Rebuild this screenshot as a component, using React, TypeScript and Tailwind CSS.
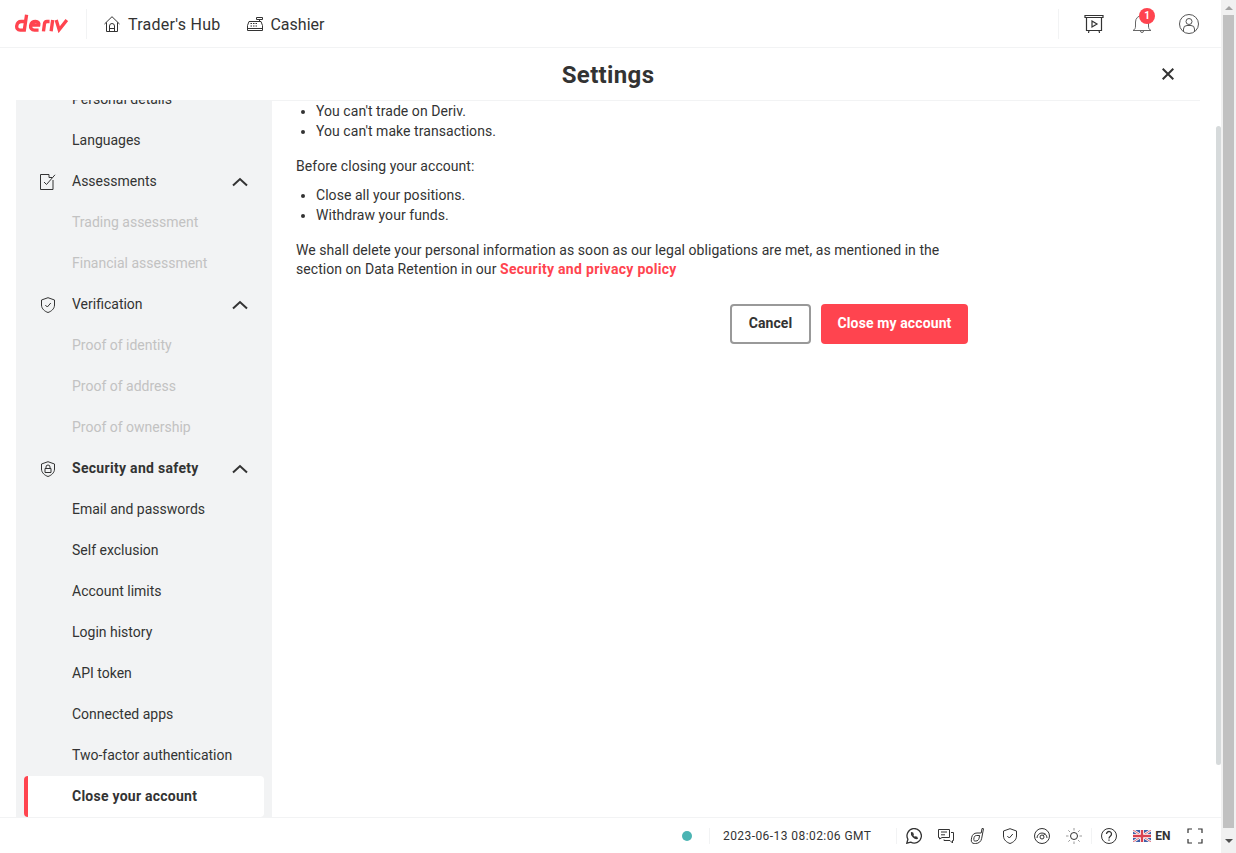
const cls = 'fill-none stroke-[#333333]'

function Logo() {
  return (
    <svg width="53" height="19" viewBox="0 0 54 19" aria-label="deriv" className="ml-[15px] mr-px shrink-0">
      <g fill="none" stroke="#ff444f" strokeWidth="3.400" strokeLinecap="butt">
        <path d="M11.800 .6 9.500 16.200H5.200C2.600 16.200 1.400 14.200 1.800 11.800 2.200 9.200 4 7.500 6.400 7.500H10.700" />
        <path d="M15.600 11.200H24.200C24.800 9 23.600 7.500 21 7.500 18 7.500 16.400 9.200 15.900 11.600 15.500 14.200 17 16.200 19.800 16.200H24" />
        <path d="M29 17.500 30 10C30.200 8.600 31 7.500 32.600 7.500H35.200" />
        <path d="M38.400 6 36.800 17.500" />
        <path d="M42 6 45 15.800 52.800 6" />
      </g>
    </svg>
  )
}

function HomeIcon() {
  return (
    <svg width="16" height="16" viewBox="0 0 16 16" className={cls}>
      <path d="M.5 8 8 .7 15.500 8M2.500 6.400V15.500H13.500V6.400" />
      <path d="M5.500 15.500V10a2.500 2.500 0 0 1 5 0v5.500M5.500 12.500h5" />
    </svg>
  )
}

function CashierIcon() {
  return (
    <svg width="16" height="16" viewBox="0 0 16 16" className={cls}>
      <path d="M.5 9.500 2 5.500H14L15.500 9.500V14.500H.5ZM.5 12.500H15.500M9.500 1.500H15.500V3.500H9.500ZM12.500 3.500V5.500" />
      <path d="M3.500 7.500H5M6 7.500H7.500M8.500 7.500H10M3.500 10H5M6 10H7.500M8.500 10H10" />
    </svg>
  )
}

function ReportsIcon() {
  return (
    <svg width="20" height="20" viewBox="0 0 20 20" className={cls}>
      <path strokeWidth="1.200" d="M1 1.500H19V3.500H1ZM2.500 3.500V16.500H17.500V3.500M5 16.500 4.500 19M15 16.500 15.500 19" />
      <path strokeWidth="1.200" d="M8 7 13 10 8 13Z" />
    </svg>
  )
}

function BellIcon() {
  return (
    <svg width="20" height="20" viewBox="0 0 20 20" className="fill-none stroke-[#666666]">
      <path d="M1 16.500C3 15.500 3.500 14 3.500 12V8a6.500 6.500 0 0 1 13 0v4c0 2 .5 3.500 2.500 4.500Z" />
      <path d="M8.500 17a1.500 1.500 0 0 0 3 0" />
    </svg>
  )
}

function UserIcon() {
  return (
    <svg width="20" height="20" viewBox="0 0 20 20" className="fill-none stroke-[#555555]">
      <circle cx="10" cy="10" r="9.500" />
      <circle cx="10" cy="7.500" r="3" />
      <path d="M4.500 17V15a3.500 3.500 0 0 1 3.500-3.500h4a3.500 3.500 0 0 1 3.500 3.500v2" />
    </svg>
  )
}

function CloseIcon() {
  return (
    <svg width="12" height="12" viewBox="0 0 12 12" className="fill-none stroke-[#333333]">
      <path strokeWidth="2" d="M.7.700 11.300 11.300M11.300.700.7 11.300" />
    </svg>
  )
}

function Chevron() {
  return (
    <svg width="16" height="10" viewBox="0 0 16 10" className="fill-none stroke-[#333333]">
      <path strokeWidth="2" d="M1 8.500 8 2l7 6.500" />
    </svg>
  )
}

function AssessIcon() {
  return (
    <svg width="16" height="16" viewBox="0 0 16 16" className={cls}>
      <path d="M9 .5H.5V15.500H13V6M9 .5V3.500H12" />
      <path d="M4 8 6.500 10.500 15 .8" />
    </svg>
  )
}

function ShieldCheck() {
  return (
    <svg width="16" height="16" viewBox="0 0 16 16" className={cls}>
      <path d="M8 .7 14.500 3V8C14.500 12 11 14.500 8 15.500 5 14.500 1.500 12 1.500 8V3Z" />
      <path d="M5.300 8 7.300 10 10.800 6" />
    </svg>
  )
}

function ShieldLock() {
  return (
    <svg width="16" height="16" viewBox="0 0 16 16" className={cls}>
      <path d="M8 .7 14.500 3V8C14.500 12 11 14.500 8 15.500 5 14.500 1.500 12 1.500 8V3Z" />
      <path d="M5 7.500H11V11.500H5ZM6 7.500V6a2 2 0 0 1 4 0v1.500" />
    </svg>
  )
}

function FooterIcons() {
  const s = 'fill-none stroke-[#333333]'
  return (
    <>
      <svg width="16" height="16" viewBox="0 0 16 16" className={`${s} ml-[9px]`}>
        <path strokeWidth="1.300" d="M.8 15.200 1.900 11.300A7.200 7.200 0 1 1 4.700 14.100Z" />
        <path strokeWidth="1.300" d="M5.500 4.800C4.800 7 8.800 11.300 11.200 10.500L10.800 9.300 9.500 8.900 8.800 9.500C8 9 7 8 6.600 7.200L7.200 6.500 6.700 5Z" />
      </svg>
      <svg width="16" height="16" viewBox="0 0 16 16" className={`${s} ml-4`}>
        <path d="M.5 1.500H11.500V9.500H4L1.500 11V9.500H.5Z" />
        <path d="M3 4H9M3 6.800H7M13 4.500H15.500V12.500H14.500V15L12 12.500H6V11.500" />
      </svg>
      <svg width="16" height="16" viewBox="0 0 16 16" className={`${s} ml-4`}>
        <path d="M13.500.7 12 .5 11.200 5H7C4.200 5 2.200 6.800 1.700 9.300L1.300 11.800C1 14 2.300 15.500 4.300 15.500H5.600C8.800 15.500 11.200 13.400 11.700 10.300Z" />
        <path d="M9.600 7.500H6.700C5.300 7.500 4.300 8.300 4 9.700L3.800 11.400C3.600 12.400 4.200 13 5 13H5.800C7.500 13 8.800 11.900 9.100 10.200Z" />
      </svg>
      <span className="ml-4 flex">
        <ShieldCheck />
      </span>
      <svg width="16" height="16" viewBox="0 0 16 16" className={`${s} ml-4`}>
        <circle cx="8" cy="8" r="7.500" />
        <circle cx="8" cy="9" r="2" />
        <path d="M3 10a5 5 0 0 1 10 0M9.300 7.700 11 5.500" />
      </svg>
      <svg width="16" height="16" viewBox="0 0 16 16" className={`${s} ml-4`}>
        <circle cx="8" cy="8" r="3.500" />
        <path stroke="#999999" d="M8 0V2.500M8 13.500V16M0 8H2.500M13.500 8H16M2.300 2.300 4 4M12 12 13.700 13.700M13.700 2.300 12 4M4 12 2.300 13.700" />
      </svg>
    </>
  )
}

function Flag() {
  return (
    <svg width="18" height="12" viewBox="0 0 18 12" className="ml-[16px]">
      <rect width="18" height="12" fill="#3f5fa8" />
      <path d="M0 0 18 12M18 0 0 12" stroke="#ffffff" strokeWidth="2.400" />
      <path d="M0 0 18 12M18 0 0 12" stroke="#d8404f" strokeWidth="0.800" />
      <path d="M9 0V12M0 6H18" stroke="#ffffff" strokeWidth="4" />
      <path d="M9 0V12M0 6H18" stroke="#d8404f" strokeWidth="2.400" />
    </svg>
  )
}

function Row({ label, tone = 'normal' }: { label: string; tone?: 'normal' | 'muted' | 'active' }) {
  if (tone === 'active') {
    return (
      <div className="mx-2 flex h-[41px] items-center rounded-[4px] border-l-4 border-[#ff444f] bg-white pl-[44px] font-bold tracking-[0.25px] text-[#333333]">
        {label}
      </div>
    )
  }
  return (
    <div className={`flex h-[41px] items-center pl-[56px] ${tone === 'muted' ? 'text-[#c2c2c2]' : 'text-[#333333]'}`}>
      {label}
    </div>
  )
}

function Group({ label, icon, bold }: { label: string; icon: React.ReactNode; bold?: boolean }) {
  return (
    <div className="flex h-[41px] items-center px-[24px] text-[#333333]">
      <span className="flex w-[32px]">{icon}</span>
      <span className={bold ? 'font-bold tracking-[0.3px]' : ''}>{label}</span>
      <span className="ml-auto flex">
        <Chevron />
      </span>
    </div>
  )
}

function Sidebar() {
  return (
    <aside className="w-[256px] shrink-0 overflow-hidden bg-[#f2f3f4] text-[14px]">
      <div className="-mt-[21px]">
        <Row label="Personal details" />
        <Row label="Languages" />
        <Group label="Assessments" icon={<AssessIcon />} />
        <Row label="Trading assessment" tone="muted" />
        <Row label="Financial assessment" tone="muted" />
        <Group label="Verification" icon={<ShieldCheck />} />
        <Row label="Proof of identity" tone="muted" />
        <Row label="Proof of address" tone="muted" />
        <Row label="Proof of ownership" tone="muted" />
        <Group label="Security and safety" icon={<ShieldLock />} bold />
        <Row label="Email and passwords" />
        <Row label="Self exclusion" />
        <Row label="Account limits" />
        <Row label="Login history" />
        <Row label="API token" />
        <Row label="Connected apps" />
        <Row label="Two-factor authentication" />
        <Row label="Close your account" tone="active" />
      </div>
    </aside>
  )
}

function Content() {
  return (
    <main className="flex-1 overflow-hidden border-t border-[#f2f3f4] pl-6 text-[14px] leading-5 tracking-[0.05px] text-[#333333]">
      <div className="w-[672px]">
        <ul className="list-disc pl-5">
          <li>You can't trade on Deriv.</li>
          <li>You can't make transactions.</li>
        </ul>
        <p className="mt-[15px]">Before closing your account:</p>
        <ul className="mt-[9px] list-disc pl-5">
          <li>Close all your positions.</li>
          <li>Withdraw your funds.</li>
        </ul>
        <p className="mt-4 leading-[19px]">
          We shall delete your personal information as soon as our legal obligations are met, as mentioned in the
          section on Data Retention in our{' '}
          <span className="font-bold tracking-[0.3px] text-[#ff444f]">Security and privacy policy</span>
        </p>
        <div className="mt-[25px] flex justify-end gap-[10px]">
          <button className="h-10 w-[81px] rounded-[4px] border-2 border-[#999999] pb-[2px] font-bold text-[#333333]">Cancel</button>
          <button className="h-10 w-[147px] rounded-[4px] bg-[#ff444f] pb-[2px] font-bold tracking-[0.12px] text-white">Close my account</button>
        </div>
      </div>
    </main>
  )
}

function PageScrollbar() {
  return (
    <div className="flex w-[15px] shrink-0 flex-col items-center bg-[#f1f1f1]">
      <div className="mt-[6px] h-0 w-0 border-x-[4px] border-b-[4px] border-x-transparent border-b-[#a3a3a3]" />
      <div className="mt-[5px] h-[813px] w-[11px] bg-[#c1c1c1]" />
      <div className="mt-[11px] h-0 w-0 border-x-[4px] border-t-[4px] border-x-transparent border-t-[#505050]" />
    </div>
  )
}

export default function App() {
  return (
    <div className="flex h-[853px] w-[1236px] overflow-hidden bg-white font-['Roboto',sans-serif]">
      <div className="flex w-[1221px] flex-col">
        <header className="flex h-[48px] shrink-0 items-center border-b border-[#f2f3f4] text-[#333333]">
          <Logo />
          <div className="ml-[17px] h-[30px] w-px bg-[#f2f3f4]" />
          <span className="ml-[17px] flex">
            <HomeIcon />
          </span>
          <span className="ml-2 mt-[2px] text-[16px] tracking-[0.25px]">Trader's Hub</span>
          <span className="ml-[27px] flex">
            <CashierIcon />
          </span>
          <span className="ml-[7px] mt-[2px] text-[16px]">Cashier</span>
          <div className="ml-auto h-[30px] w-px bg-[#f2f3f4]" />
          <span className="ml-[25px] flex">
            <ReportsIcon />
          </span>
          <span className="relative ml-[28px] flex">
            <BellIcon />
            <span className="absolute -right-[3px] -top-[6px] flex h-4 w-4 items-center justify-center rounded-full bg-[#ff444f] text-[10px] font-bold text-white">
              1
            </span>
          </span>
          <span className="ml-[27px] mr-[22px] flex">
            <UserIcon />
          </span>
        </header>
        <div className="flex min-h-0 flex-1">
          <div className="ml-4 flex w-[1184px] flex-col">
            <div className="relative flex h-[52px] shrink-0 items-center justify-center pt-[2px]">
              <h1 className="text-[24px] font-bold tracking-[0.35px] text-[#333333]">Settings</h1>
              <span className="absolute right-[26px] top-[20px] flex">
                <CloseIcon />
              </span>
            </div>
            <div className="flex min-h-0 flex-1">
              <Sidebar />
              <Content />
            </div>
          </div>
          <div className="flex flex-1 justify-end">
            <div className="mt-[78px] h-[639px] w-[5px] rounded-full bg-[#d6dadb]" />
          </div>
        </div>
        <footer className="flex h-[36px] shrink-0 items-center border-t border-[#f2f3f4] text-[#333333]">
          <span className="ml-[682px] h-[10px] w-[10px] rounded-full bg-[#4bb4b3]" />
          <div className="ml-[17px] h-4 w-px bg-[#f2f3f4]" />
          <span className="ml-[13px] text-[12px] tracking-[0.43px]">2023-06-13 08:02:06 GMT</span>
          <div className="ml-[25px] h-4 w-px bg-[#f2f3f4]" />
          <FooterIcons />
          <div className="ml-[9px] h-4 w-px bg-[#f2f3f4]" />
          <span className="ml-[9px] flex">
            <svg width="16" height="16" viewBox="0 0 16 16" className="fill-none stroke-[#333333]">
              <circle cx="8" cy="8" r="7.500" />
              <path strokeWidth="1.300" d="M5.500 6a2.500 2.500 0 1 1 4 2C8.500 8.800 8 9.200 8 10.500M8 11.500v1.300" />
            </svg>
          </span>
          <Flag />
          <span className="ml-1 text-[12px] font-bold">EN</span>
          <span className="ml-[16px] flex">
            <svg width="16" height="16" viewBox="0 0 16 16" className="fill-none stroke-[#333333]">
              <path strokeWidth="1.200" d="M1 5V1H5M11 1H15V5M15 11V15H11M5 15H1V11" />
            </svg>
          </span>
        </footer>
      </div>
      <PageScrollbar />
    </div>
  )
}
